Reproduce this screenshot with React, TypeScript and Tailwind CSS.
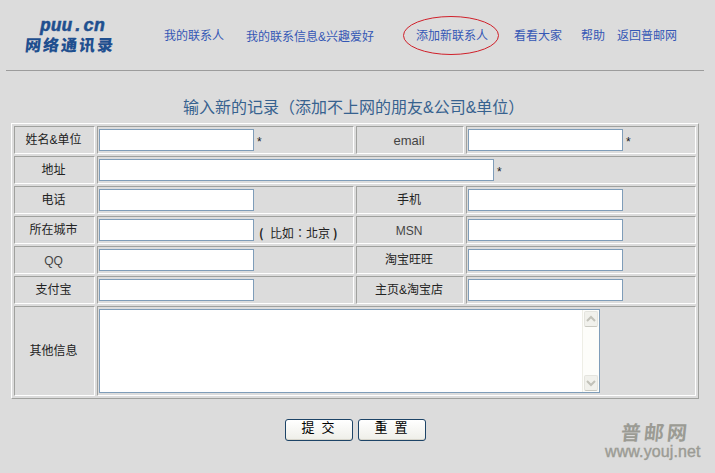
import React from "react";
import { clsx } from "clsx";

const navItems = [
  { label: "我的联系人", className: "ml-[50px] w-[60px]" },
  { label: "我的联系信息&兴趣爱好", className: "ml-[22px] w-[128px] pt-px" },
  { label: "添加新联系人", className: "ml-[42px] w-[72px]", active: true },
  { label: "看看大家", className: "ml-[26px] w-[48px]" },
  { label: "帮助", className: "ml-[19px] w-[24px]" },
  { label: "返回普邮网", className: "ml-[12px] w-[60px]" },
];

function Cell({
  className,
  children,
}: {
  className?: string;
  children: React.ReactNode;
}) {
  return (
    <div
      className={clsx(
        "flex border border-t-[#a0a19e] border-l-[#a0a19e] border-r-white border-b-white",
        className,
      )}
    >
      {children}
    </div>
  );
}

function Label({
  children,
  latin,
}: {
  children: React.ReactNode;
  latin?: boolean;
}) {
  return (
    <Cell
      className={clsx(
        "items-center justify-center pr-[2px]",
        latin && "pt-[2px] text-[#444]",
      )}
    >
      <label className="leading-4">{children}</label>
    </Cell>
  );
}

function Field({
  name,
  wide,
  note,
}: {
  name: string;
  wide?: boolean;
  note?: React.ReactNode;
}) {
  return (
    <Cell className={clsx("pt-[2px] pl-px", wide && "col-span-3")}>
      <input
        type="text"
        name={name}
        className={clsx(
          "h-[22px] shrink-0 border border-[#7f9db9] bg-white px-1 outline-none",
          wide ? "w-[395px]" : "w-[155px]",
        )}
      />
      {note}
    </Cell>
  );
}

const star = <span className="ml-[3px] pt-[5px] leading-4">*</span>;

function ScrollButton({ down }: { down?: boolean }) {
  return (
    <div className="flex h-[16px] w-[14px] items-center justify-center rounded-[2px] border border-[#e4e4de] border-b-[#c9c9c1] bg-[#f1f1ec]">
      <svg width="10" height="8" viewBox="0 0 10 8" fill="none">
        <path
          d={down ? "M1 2 L5 6 L9 2" : "M1 6 L5 2 L9 6"}
          stroke="#c2c2b9"
          strokeWidth="2"
        />
      </svg>
    </div>
  );
}

function FormButton({ children }: { children: React.ReactNode }) {
  return (
    <button
      type="button"
      className="flex h-[22px] w-[68px] justify-center rounded-[3px] border border-[#1d4467] bg-gradient-to-b from-white to-[#eeeee8] pr-[2px] text-[13px] leading-[16px] text-black shadow-[inset_0_-1px_0_#d8d6cc]"
    >
      {children}
    </button>
  );
}

export default function App() {
  return (
    <div className="h-[473px] w-[715px] overflow-hidden bg-[#dcdcdc] font-['Liberation_Sans','Noto_Sans_CJK_SC',sans-serif] text-[12px] whitespace-nowrap text-[#222]">
      <header className="mx-[6px] flex h-[71px] w-[698px] border-b border-[#9c9c9c]">
        <div className="ml-[19px] w-[89px] pt-[15px] text-[#1f4f8f]">
          <div className="ml-[15px] h-[21px] font-['Liberation_Mono',monospace] text-[18px] leading-[22px] font-bold italic [-webkit-text-stroke:0.5px_#1f4f8f]">
            puu.cn
          </div>
          <div className="-skew-x-6 text-[16px] leading-[20px] font-black tracking-[2px]">
            网络通讯录
          </div>
        </div>
        <nav className="flex pt-[28px] leading-4 text-[#3457b5]">
          {navItems.map((item) => (
            <a
              key={item.label}
              href="#"
              className={clsx("relative block", item.className)}
            >
              {item.label}
              {item.active && (
                <svg
                  className="absolute -top-[12px] -left-[14px]"
                  width="98"
                  height="40"
                  viewBox="0 0 98 40"
                  fill="none"
                >
                  <ellipse
                    cx="49"
                    cy="19.5"
                    rx="47.5"
                    ry="19"
                    stroke="#d0202a"
                  />
                </svg>
              )}
            </a>
          ))}
        </nav>
      </header>

      <main>
        <h1 className="mt-[25px] ml-[183px] h-[27px] text-[16px] leading-6 text-[#37628f]">
          输入新的记录（添加不上网的朋友&amp;公司&amp;单位）
        </h1>

        <form>
          <div className="ml-[11px] grid h-[276px] w-[688px] grid-cols-[81px_257px_108px_230px] grid-rows-[repeat(6,28px)_90px] gap-[2px] border border-t-white border-r-[#a0a19e] border-b-[#a0a19e] border-l-white p-[2px]">
            <Label>姓名&amp;单位</Label>
            <Field name="name" note={star} />
            <Label latin>
              <span className="text-[13px]">email</span>
            </Label>
            <Field name="email" note={star} />

            <Label>地址</Label>
            <Field name="address" wide note={star} />

            <Label>电话</Label>
            <Field name="phone" />
            <Label>手机</Label>
            <Field name="mobile" />

            <Label>所在城市</Label>
            <Field
              name="city"
              note={
                <span className="ml-[5px] flex pt-[6px] font-['Noto_Sans_CJK_TC',sans-serif] leading-4">
                  <b className="w-[11px]">(</b>比如：北京
                  <b className="ml-[3px]">)</b>
                </span>
              }
            />
            <Label latin>MSN</Label>
            <Field name="msn" />

            <Label latin>QQ</Label>
            <Field name="qq" />
            <Label>淘宝旺旺</Label>
            <Field name="wangwang" />

            <Label>支付宝</Label>
            <Field name="alipay" />
            <Label>主页&amp;淘宝店</Label>
            <Field name="homepage" />

            <Label>其他信息</Label>
            <Cell className="col-span-3 pt-[2px] pl-px">
              <div className="flex h-[84px] w-[501px] border border-[#7f9db9] bg-white">
                <textarea
                  name="other"
                  className="flex-1 resize-none overflow-hidden outline-none"
                />
                <div className="flex w-[17px] flex-col items-center justify-between border-l border-[#eeeee6] bg-[#fdfdfa] py-px">
                  <ScrollButton />
                  <ScrollButton down />
                </div>
              </div>
            </Cell>
          </div>

          <div className="mt-[20px] ml-[285px] flex gap-[5px]">
            <FormButton>提&nbsp; 交</FormButton>
            <FormButton>重&nbsp; 置</FormButton>
          </div>
        </form>
      </main>

      <footer className="-mt-[19px] ml-[605px] w-[98px] text-[#9b9b94]">
        <div className="-skew-x-6 pl-[16px] text-[20px] leading-[22px] font-bold tracking-[3px]">
          普邮网
        </div>
        <div className="text-[16px] leading-[16px] tracking-[0.1px] [-webkit-text-stroke:0.4px_#9b9b94]">
          www.youj.net
        </div>
      </footer>
    </div>
  );
}
